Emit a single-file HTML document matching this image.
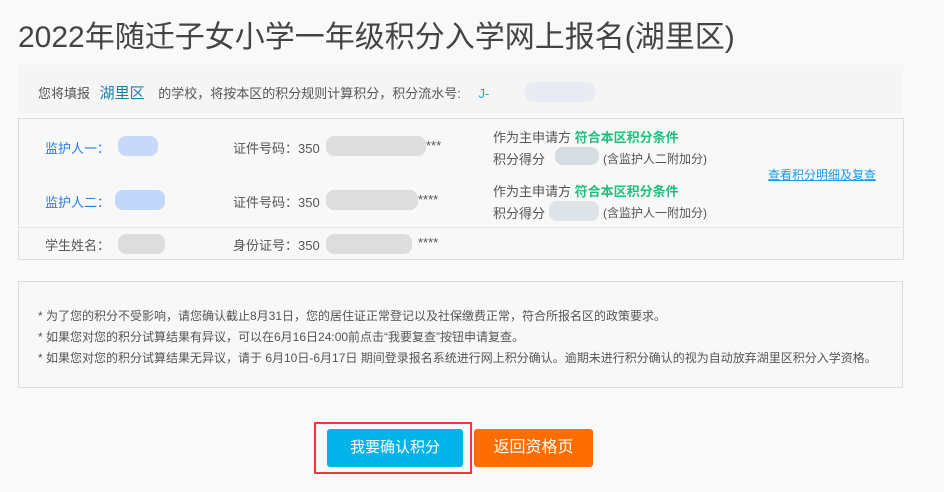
<!DOCTYPE html>
<html><head><meta charset="utf-8"><style>
*{margin:0;padding:0;box-sizing:border-box}
body{width:944px;height:492px;background:#f9f9f9;font-family:"Liberation Sans","Noto Sans CJK SC",sans-serif;color:#555;position:relative;overflow:hidden;font-size:13px}
.a{position:absolute;white-space:nowrap}
.blur{position:absolute;border-radius:8px;background:#ddd}
.blue{color:#2a7ae2}
.green{color:#1fbf7f;font-weight:bold}
</style></head><body>
<div class="a" style="left:18px;top:12px;font-size:30px;color:#444">2022年随迁子女小学一年级积分入学网上报名(湖里区)</div>
<div class="a" style="left:18px;top:65px;width:885px;height:48px;background:#f5f5f5"></div>
<div class="a" style="left:38px;top:82px">您将填报 <span style="color:#1a7ea6;font-size:15px;margin:0 10px 0 6px">湖里区</span> 的学校，将按本区的积分规则计算积分，积分流水号: <span style="color:#2a9ee2;margin-left:14px">J-</span></div>
<div class="blur" style="left:525px;top:82px;width:70px;height:20px;background:#e8ecf2"></div>
<div class="a" style="left:18px;top:118px;width:886px;height:142px;border:1px solid #ddd;background:#f8f8f8"></div>
<div class="a" style="left:18px;top:227px;width:886px;height:1px;background:#e6e6e6"></div>
<div class="a blue" style="left:45px;top:138px">监护人一：</div>
<div class="blur" style="left:118px;top:136px;width:40px;height:20px;background:#c8d8fb"></div>
<div class="a" style="left:233px;top:138px">证件号码：350</div>
<div class="blur" style="left:326px;top:136px;width:100px;height:20px"></div>
<div class="a" style="left:426px;top:138px">***</div>
<div class="a blue" style="left:45px;top:192px">监护人二：</div>
<div class="blur" style="left:115px;top:190px;width:50px;height:20px;background:#c2d5fb"></div>
<div class="a" style="left:233px;top:192px">证件号码：350</div>
<div class="blur" style="left:326px;top:190px;width:92px;height:20px"></div>
<div class="a" style="left:418px;top:192px">****</div>
<div class="a" style="left:45px;top:235px">学生姓名：</div>
<div class="blur" style="left:118px;top:234px;width:47px;height:20px"></div>
<div class="a" style="left:233px;top:235px">身份证号：350</div>
<div class="blur" style="left:326px;top:234px;width:86px;height:20px"></div>
<div class="a" style="left:418px;top:235px">****</div>
<div class="a" style="left:493px;top:127px">作为主申请方 <span class="green">符合本区积分条件</span></div>
<div class="a" style="left:493px;top:149px">积分得分</div>
<div class="blur" style="left:555px;top:147px;width:44px;height:18px;background:#d6dde0"></div>
<div class="a" style="left:603px;top:150px;font-size:12px">(含监护人二附加分)</div>
<div class="a" style="left:493px;top:181px">作为主申请方 <span class="green">符合本区积分条件</span></div>
<div class="a" style="left:493px;top:203px">积分得分</div>
<div class="blur" style="left:549px;top:201px;width:50px;height:20px;background:#dde3e6"></div>
<div class="a" style="left:603px;top:204px;font-size:12px">(含监护人一附加分)</div>
<div class="a" style="left:768px;top:166px;font-size:12px;color:#1a9ae6;text-decoration:underline">查看积分明细及复查</div>
<div class="a" style="left:18px;top:281px;width:885px;height:107px;border:1px solid #ddd;background:#f8f8f8"></div>
<div class="a" style="left:38px;top:306px;font-size:12px;line-height:21px">* 为了您的积分不受影响，请您确认截止8月31日，您的居住证正常登记以及社保缴费正常，符合所报名区的政策要求。<br>* 如果您对您的积分试算结果有异议，可以在6月16日24:00前点击“我要复查”按钮申请复查。<br>* 如果您对您的积分试算结果无异议，请于 6月10日-6月17日 期间登录报名系统进行网上积分确认。逾期未进行积分确认的视为自动放弃湖里区积分入学资格。</div>
<div class="a" style="left:314px;top:422px;width:158px;height:52px;border:2px solid #f2373c"></div>
<div class="a" style="left:327px;top:429px;width:136px;height:38px;background:#00b3e8;border-radius:3px;color:#fff;font-size:15px;text-align:center;line-height:38px">我要确认积分</div>
<div class="a" style="left:474px;top:429px;width:119px;height:38px;background:#ff6d00;border-radius:3px;color:#fff;font-size:16px;text-align:center;line-height:38px">返回资格页</div>
</body></html>
